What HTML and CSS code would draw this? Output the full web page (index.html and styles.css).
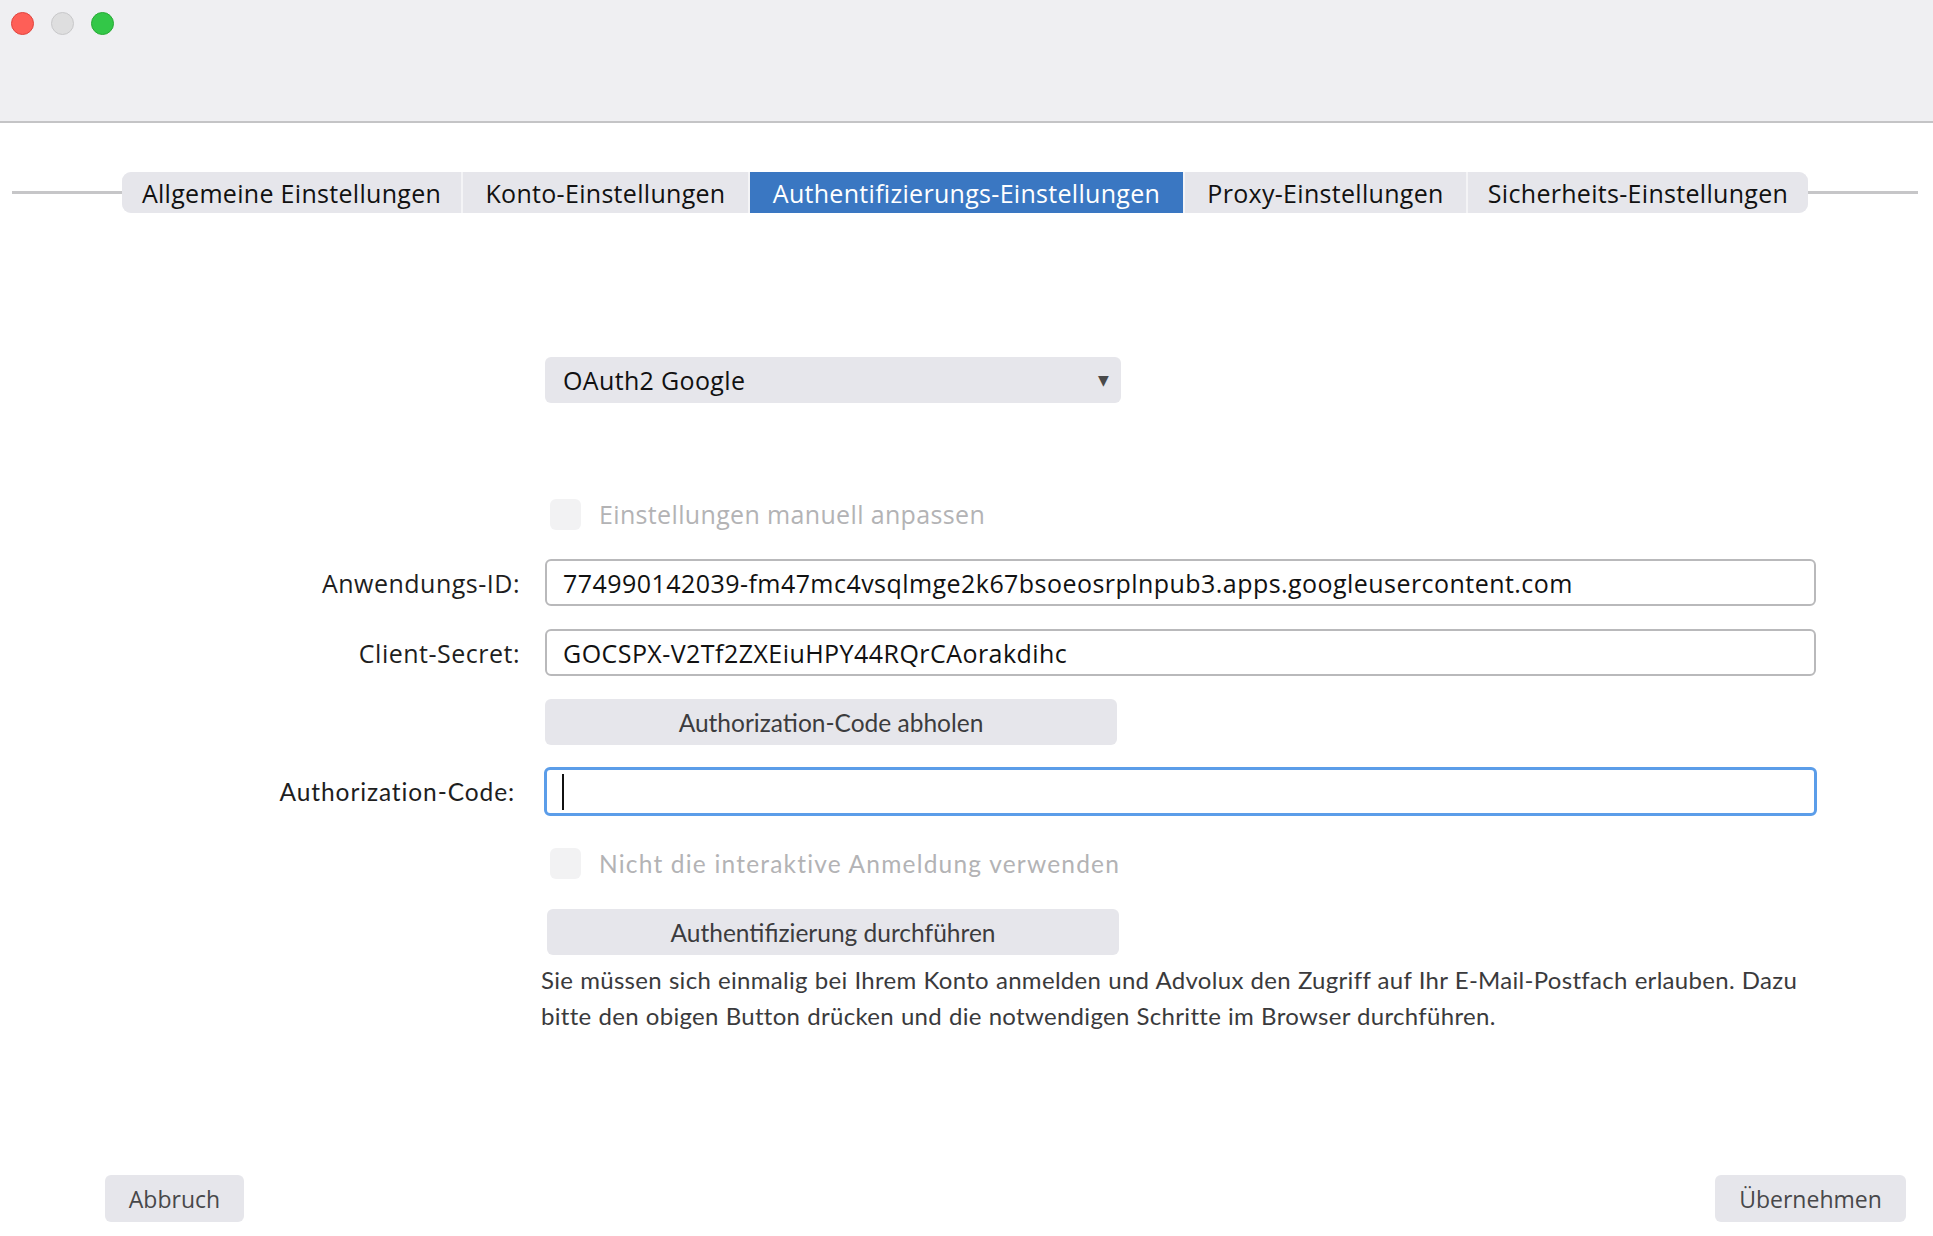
FILE: index.html
```html
<!DOCTYPE html>
<html lang="de">
<head>
<meta charset="utf-8">
<link rel="stylesheet" href="styles.css">
<title>Einstellungen</title>
</head>
<body>
<div class="window">
  <header class="titlebar">
    <div class="lights">
      <span class="light red"></span>
      <span class="light gray"></span>
      <span class="light green"></span>
    </div>
  </header>
  <main class="content">
    <nav class="tabrow">
      <span class="tabline"></span>
      <div class="tabs">
        <span class="tab first">Allgemeine Einstellungen</span>
        <span class="tab">Konto-Einstellungen</span>
        <span class="tab active">Authentifizierungs-Einstellungen</span>
        <span class="tab">Proxy-Einstellungen</span>
        <span class="tab last">Sicherheits-Einstellungen</span>
      </div>
      <span class="tabline"></span>
    </nav>

    <section class="form">
      <div class="row r-select">
        <span class="label"></span>
        <div class="select"><span>OAuth2 Google</span><span class="arrow">▼</span></div>
      </div>
      <div class="row r-check1">
        <span class="label"></span>
        <label class="check"><span class="box"></span><span>Einstellungen manuell anpassen</span></label>
      </div>
      <div class="row r-input1">
        <span class="label">Anwendungs-ID:</span>
        <div class="input">774990142039-fm47mc4vsqlmge2k67bsoeosrplnpub3.apps.googleusercontent.com</div>
      </div>
      <div class="row r-input2">
        <span class="label">Client-Secret:</span>
        <div class="input">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</div>
      </div>
      <div class="row r-btn1">
        <span class="label"></span>
        <div class="btn wide">Authorization-Code abholen</div>
      </div>
      <div class="row r-input3">
        <span class="label cond">Authorization-Code:</span>
        <div class="input focus"><span class="caret"></span></div>
      </div>
      <div class="row r-check2">
        <span class="label"></span>
        <label class="check"><span class="box"></span><span class="cond">Nicht die interaktive Anmeldung verwenden</span></label>
      </div>
      <div class="row r-btn2">
        <span class="label"></span>
        <div class="btn wide">Authentifizierung durchführen</div>
      </div>
      <div class="row r-text">
        <span class="label"></span>
        <p class="note">Sie müssen sich einmalig bei Ihrem Konto anmelden und Advolux den Zugriff auf Ihr E-Mail-Postfach erlauben. Dazu bitte den obigen Button drücken und die notwendigen Schritte im Browser durchführen.</p>
      </div>
    </section>

    <footer class="footer">
      <div class="btn small">Abbruch</div>
      <div class="btn small">Übernehmen</div>
    </footer>
  </main>
</div>
</body>
</html>
```
FILE: styles.css
```css
html, body {
  margin: 0;
  padding: 0;
  background: #ffffff;
}
body {
  width: 1933px;
  height: 1236px;
  overflow: hidden;
  font-family: "Open Sans", "Noto Sans", sans-serif;
  color: #1e1e1e;
}
.window {
  height: 1236px;
  display: flex;
  flex-direction: column;
}
.titlebar {
  height: 121px;
  background: #efeff2;
  border-bottom: 2px solid #c4c4c6;
  flex: none;
}
.lights {
  display: flex;
  gap: 17px;
  padding: 12px 0 0 11px;
}
.light {
  width: 23px;
  height: 23px;
  border-radius: 50%;
  box-sizing: border-box;
}
.light.red { background: #fe5f57; border: 1px solid #e0443e; }
.light.gray { background: #dededf; border: 1px solid #c8c8ca; }
.light.green { background: #33c748; border: 1px solid #27aa35; }

.content {
  flex: 1;
  display: flex;
  flex-direction: column;
  position: relative;
}
.tabrow {
  display: flex;
  align-items: center;
  margin-top: 49px;
  padding: 0 15px 0 12px;
}
.tabline {
  flex: 1;
  height: 3px;
  background: #c6c6c8;
}
.tabs {
  display: flex;
  height: 41px;
  gap: 2px;
  background: #f4f4f6;
  border-radius: 9px;
}
.tab {
  display: flex;
  align-items: center;
  justify-content: center;
  background: #e6e6eb;
  font-size: 25px;
  letter-spacing: 0.3px;
  color: #111;
  white-space: nowrap;
  box-sizing: border-box;
}
.tab.first { border-radius: 9px 0 0 9px; width: 339px; }
.tab:nth-child(2) { width: 285px; }
.tab.active { background: #3a77c2; color: #fff; width: 433px; }
.tab:nth-child(4) { width: 281px; }
.tab.last { border-radius: 0 9px 9px 0; width: 340px; }

.form {
  display: flex;
  flex-direction: column;
}
.row {
  display: grid;
  grid-template-columns: 520px 1271px;
  column-gap: 25px;
  align-items: center;
}
.label {
  text-align: right;
  font-size: 25px;
  letter-spacing: 0.5px;
  color: #1e1e1e;
  white-space: nowrap;
}
.cond, .btn, .note {
  font-family: "Lato", "Liberation Sans", sans-serif;
}
.label.cond { font-size: 24.5px; letter-spacing: 0.9px; padding-right: 5px; }

.r-select { margin-top: 144px; }
.select {
  width: 576px;
  height: 46px;
  box-sizing: border-box;
  background: #e6e6eb;
  border-radius: 6px;
  display: flex;
  align-items: center;
  justify-content: space-between;
  padding: 0 12px 0 18px;
  font-size: 25px;
  letter-spacing: 0.35px;
  color: #111;
}
.arrow {
  font-size: 14px;
  color: #4a4a4a;
  font-family: "DejaVu Sans", sans-serif;
}
.r-check1 { margin-top: 94px; }
.check {
  display: flex;
  align-items: center;
  gap: 18px;
  padding-left: 5px;
  color: #b3b3b5;
  font-size: 25px;
  letter-spacing: 0.35px;
  white-space: nowrap;
}
.check .cond { font-size: 24.5px; letter-spacing: 1.2px; }
.box {
  width: 31px;
  height: 31px;
  border-radius: 6px;
  background: #f2f2f3;
  flex: none;
}
.r-input1 { margin-top: 28px; }
.input {
  height: 47px;
  box-sizing: border-box;
  border: 2px solid #b9b9bb;
  border-radius: 6px;
  background: #fff;
  display: flex;
  align-items: center;
  padding: 0 16px;
  font-size: 25px;
  letter-spacing: 0.45px;
  color: #111;
  white-space: nowrap;
  overflow: hidden;
}
.r-input2 { margin-top: 23px; }
.r-btn1 { margin-top: 23px; }
.btn {
  height: 46px;
  box-sizing: border-box;
  background: #e6e6eb;
  border-radius: 6px;
  display: flex;
  align-items: center;
  justify-content: center;
  font-size: 24.5px;
  color: #3c3c3e;
  white-space: nowrap;
}
.btn.wide { width: 572px; }
.r-input3 { margin-top: 22px; }
.input.focus {
  height: 49px;
  border: 3px solid #5b9de9;
  padding-left: 15px;
  margin-left: -1px;
  width: 1273px;
}
.caret {
  width: 2px;
  height: 36px;
  background: #111;
}
.r-check2 { margin-top: 32px; }
.r-btn2 { margin-top: 30px; }
.r-btn2 .btn { margin-left: 2px; }
.r-text { margin-top: 7px; }
.note {
  margin: 0 0 0 -4px;
  font-size: 24px;
  letter-spacing: 0.3px;
  word-spacing: 0.5px;
  line-height: 36px;
  color: #3a3a3c;
  width: 1300px;
}
.footer {
  position: absolute;
  left: 105px;
  right: 27px;
  bottom: 14px;
  display: flex;
  justify-content: space-between;
}
.btn.small {
  height: 47px;
  font-family: "Open Sans", "Noto Sans", sans-serif;
  font-size: 23px;
  letter-spacing: 0;
  color: #48484a;
}
.footer .btn:first-child { width: 139px; }
.footer .btn:last-child { width: 191px; }
```
